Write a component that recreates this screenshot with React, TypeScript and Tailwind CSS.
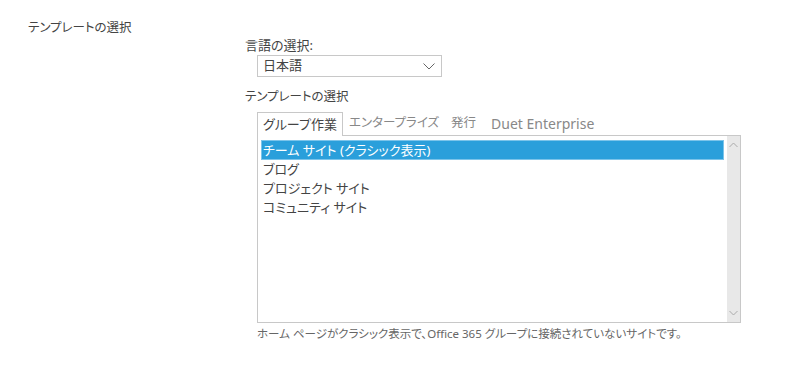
import React, { useState } from 'react';

const font = "font-['Noto_Sans','Noto_Sans_CJK_JP',sans-serif] [font-feature-settings:'palt']";

const tabs = ['グループ作業', 'エンタープライズ', '発行', 'Duet Enterprise'];
const templates = ['チーム サイト (クラシック表示)', 'ブログ', 'プロジェクト サイト', 'コミュニティ サイト'];

const Chevron: React.FC<{ up?: boolean; className?: string }> = ({ up, className }) => (
  <svg width="9" height="6" viewBox="0 0 9 6" className={className}>
    <polyline
      points={up ? '0.5,5 4.5,1 8.5,5' : '0.5,1 4.5,5 8.5,1'}
      fill="none"
      stroke="currentColor"
      strokeWidth="1"
    />
  </svg>
);

const App: React.FC = () => {
  const [activeTab, setActiveTab] = useState(0);
  const [selected, setSelected] = useState(0);

  return (
    <div className={`${font} w-[800px] h-[368px] bg-white text-[#444] flex pt-[19px] pl-[28px]`}>
      {/* Left label */}
      <div className="w-[217px] text-[12.5px] leading-[18px]">テンプレートの選択</div>

      {/* Right column */}
      <div className="flex flex-col pt-[17px]">
        <div className="text-[13px] leading-[18px]">言語の選択:</div>
        <div className="ml-[12px] mt-[1px] w-[185px] h-[22px] border border-[#c8c8c8] flex items-center justify-between pl-[5px] pr-[6px] text-[13px]">
          <span>日本語</span>
          <svg width="12" height="7" viewBox="0 0 12 7" className="text-[#666]">
            <polyline points="0.5,0.5 6,6 11.5,0.5" fill="none" stroke="currentColor" strokeWidth="1" />
          </svg>
        </div>

        <div className="text-[12.5px] leading-[18px] mt-[11px]">テンプレートの選択</div>

        <div className="ml-[12px] mt-[5px] w-[484px]">
          {/* Tabs */}
          <div className="flex items-end h-[24px]">
            {tabs.map((t, i) =>
              i === activeTab ? (
                <button
                  key={t}
                  onClick={() => setActiveTab(i)}
                  className="h-[24px] px-[5px] border border-b-0 border-[#c8c8c8] bg-white text-[13px] text-[#444] relative top-[1px]"
                >
                  {t}
                </button>
              ) : (
                <button
                  key={t}
                  onClick={() => setActiveTab(i)}
                  className={
                    i === 3
                      ? 'h-[24px] pl-[9px] pr-[6px] text-[14px] text-[#888]'
                      : 'h-[24px] px-[6px] text-[12.5px] text-[#888]'
                  }
                >
                  {t}
                </button>
              )
            )}
          </div>

          {/* List box */}
          <div className="h-[188px] border border-[#c8c8c8] flex">
            <div className="flex-1 pl-[4px] pr-[4px] pt-[5px]">
              {templates.map((t, i) => (
                <div
                  key={t}
                  onClick={() => setSelected(i)}
                  className={
                    i === selected
                      ? 'h-[18px] leading-[18px] mb-[1px] text-[13px] px-[1px] bg-[#2a9fdb] text-white outline outline-1 outline-[#7cc4ea]'
                      : 'h-[18px] leading-[18px] mb-[1px] text-[13px] px-[1px] text-[#444]'
                  }
                >
                  {t}
                </div>
              ))}
            </div>
            <div className="w-[13px] bg-[#e8e8e8] flex flex-col justify-between items-center py-[6px] text-[#aaa]">
              <Chevron up />
              <Chevron />
            </div>
          </div>

          <div className="mt-[3px] text-[11.5px] leading-[16px] text-[#666]">
            ホーム ページがクラシック表示で、Office 365 グループに接続されていないサイトです。
          </div>
        </div>
      </div>
    </div>
  );
};

export default App;
